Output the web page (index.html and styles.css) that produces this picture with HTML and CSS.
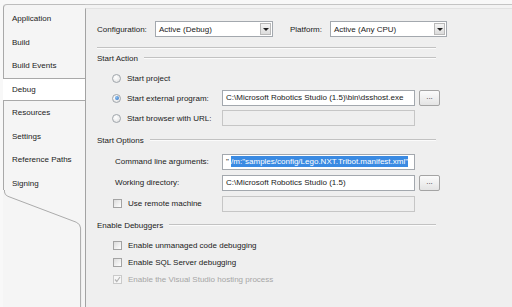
FILE: index.html
```html
<!DOCTYPE html>
<html>
  <head>
    <title>Project Properties - Debug</title>
    <link rel="stylesheet" href="styles.css">
  </head>

  <body>
    <div class="frame">
      <div class="sidebar">
        <ul class="tabs">
          <li>Application</li>
          <li>Build</li>
          <li>Build Events</li>
          <li class="active">Debug</li>
          <li>Resources</li>
          <li>Settings</li>
          <li>Reference Paths</li>
          <li>Signing</li>
        </ul>
        <svg class="tabs-end" width="82" height="120" viewBox="0 0 82 120">
          <path d="M0.5 0 L0.5 2 Q0.5 5 4 6.5 L74 33 Q78.5 35 78.5 39 L78.5 120" fill="none" stroke="#a9a9a9" stroke-width="1"/>
        </svg>
      </div>

      <div class="panel-wrap">
        <div class="panel">
          <div class="config-row">
            <span class="config-label">Configuration:</span>
            <div class="select config-select">
              <span class="select-text">Active (Debug)</span>
              <span class="select-btn"><span class="arrow"></span></span>
            </div>
            <span class="config-label platform-label">Platform:</span>
            <div class="select platform-select">
              <span class="select-text">Active (Any CPU)</span>
              <span class="select-btn"><span class="arrow"></span></span>
            </div>
          </div>

          <div class="sep"></div>

          <div class="group-head"><span>Start Action</span></div>
          <div class="opt-rows radios">
            <div class="opt-row">
              <div class="choice"><span class="radio"></span>Start project</div>
            </div>
            <div class="opt-row">
              <div class="choice"><span class="radio on"></span>Start external program:</div>
              <div class="textbox">C:\Microsoft Robotics Studio (1.5)\bin\dsshost.exe</div>
              <div class="btn">...</div>
            </div>
            <div class="opt-row">
              <div class="choice"><span class="radio"></span>Start browser with URL:</div>
              <div class="textbox disabled"></div>
            </div>
          </div>

          <div class="group-head options-head"><span>Start Options</span></div>
          <div class="opt-rows fields">
            <div class="opt-row">
              <div class="field-label">Command line arguments:</div>
              <div class="textbox">"&nbsp;<span class="selected">/m:"samples/config/Lego.NXT.Tribot.manifest.xml"</span></div>
            </div>
            <div class="opt-row">
              <div class="field-label">Working directory:</div>
              <div class="textbox">C:\Microsoft Robotics Studio (1.5)</div>
              <div class="btn">...</div>
            </div>
            <div class="opt-row">
              <div class="choice"><span class="check"></span>Use remote machine</div>
              <div class="textbox disabled"></div>
            </div>
          </div>

          <div class="group-head debuggers-head"><span>Enable Debuggers</span></div>
          <div class="opt-rows checks">
            <div class="opt-row">
              <div class="choice wide"><span class="check"></span>Enable unmanaged code debugging</div>
            </div>
            <div class="opt-row">
              <div class="choice wide"><span class="check"></span>Enable SQL Server debugging</div>
            </div>
            <div class="opt-row">
              <div class="choice wide dim">
                <span class="check checked">
                  <svg width="7" height="7" viewBox="0 0 7 7"><path d="M1 3.5 L2.8 5.5 L6 1" fill="none" stroke="#b4b4b4" stroke-width="1.2"/></svg>
                </span>Enable the Visual Studio hosting process
              </div>
            </div>
          </div>
        </div>
      </div>
    </div>
  </body>
</html>
```

FILE: styles.css
```css
* {
  box-sizing: border-box;
  margin: 0;
  padding: 0;
}

html, body {
  height: 100%;
}

body {
  background: #f8f8f8;
  color: #1a1a1a;
  font-family: "Liberation Sans", Arial, sans-serif;
  font-size: 8px;
  overflow: hidden;
}

.frame {
  display: flex;
  height: calc(100% - 4px);
  margin: 4px 0 0 3px;
}

/* Left tab strip */
.sidebar {
  width: 82px;
  display: flex;
  flex-direction: column;
  background: #f5f5f5;
}

.tabs {
  list-style: none;
  border-left: 1px solid #a9a9a9;
  border-top: 1px solid #bdbdbd;
  border-top-left-radius: 4px;
  padding-top: 2px;
  height: 186px;
}

.tabs li {
  height: 23.5px;
  line-height: 23.5px;
  padding-left: 8px;
  color: #222;
}

.tabs li.active {
  background: #ffffff;
  border-top: 1px solid #a9a9a9;
  border-bottom: 1px solid #a9a9a9;
  margin-left: -1px;
  padding-left: 9px;
  line-height: 21.5px;
}

.tabs-end {
  display: block;
  flex: 1;
}

/* Main page */
.panel-wrap {
  flex: 1;
  border-top: 1px solid #c4c4c4;
  background: #f3f3f3;
}

.panel {
  height: calc(100% - 3px);
  margin-top: 3px;
  border-left: 1px solid #a3a3a3;
  border-top: 1px solid #e2e2e2;
  background: #efefef;
  padding: 12px 0 0 11px;
}

.config-row {
  display: flex;
  align-items: center;
  height: 16px;
}

.config-label {
  width: 58px;
}

.platform-label {
  width: 40px;
  margin-left: 17px;
}

.select {
  height: 16px;
  background: #fff;
  border: 1px solid #a3a8ae;
  display: flex;
  align-items: center;
  padding: 1px 1px 1px 3px;
}

.config-select {
  width: 118px;
}

.platform-select {
  width: 117px;
}

.select-text {
  flex: 1;
}

.select-btn {
  width: 11px;
  height: 12px;
  background: linear-gradient(#f4f4f4, #dcdcdc);
  border: 1px solid #b9b9b9;
  display: flex;
  align-items: center;
  justify-content: center;
}

.arrow {
  width: 0;
  height: 0;
  border-left: 3px solid transparent;
  border-right: 3px solid transparent;
  border-top: 3px solid #222;
}

.sep {
  width: 339px;
  margin-top: 10px;
  border-top: 1px solid #c2c2c2;
  border-bottom: 1px solid #fbfbfb;
}

.group-head {
  display: flex;
  align-items: center;
  width: 339px;
  height: 12px;
  margin-top: 3px;
}

.group-head::after {
  content: "";
  flex: 1;
  margin-left: 6px;
  border-top: 1px solid #c2c2c2;
  border-bottom: 1px solid #fbfbfb;
}

.options-head {
  margin-top: 6px;
}

.debuggers-head {
  margin-top: 5px;
}

.opt-rows {
  display: flex;
  flex-direction: column;
  padding-left: 15px;
}

.radios {
  margin-top: 4px;
}

.fields {
  margin-top: 5px;
}

.checks {
  margin-top: 6px;
}

.opt-row {
  display: grid;
  grid-template-columns: 106px 193px 21px;
  column-gap: 4px;
  align-items: center;
  height: 20px;
}

.fields .opt-row {
  height: 21px;
}

.checks .opt-row {
  height: 17px;
  grid-template-columns: 300px;
}

.choice {
  display: flex;
  align-items: center;
  gap: 6px;
  white-space: nowrap;
}

.choice.dim {
  color: #a6a6a6;
}

.field-label {
  padding-left: 3px;
  white-space: nowrap;
}

.radio {
  width: 9px;
  height: 9px;
  border-radius: 50%;
  border: 1px solid #a0a6ac;
  background: radial-gradient(circle at 40% 35%, #ffffff, #dedede);
  display: inline-flex;
  align-items: center;
  justify-content: center;
}

.radio.on::after {
  content: "";
  width: 4px;
  height: 4px;
  border-radius: 50%;
  background: radial-gradient(circle at 35% 35%, #8cc0f0, #2a6cc0);
}

.check {
  width: 9px;
  height: 9px;
  margin-left: 1px;
  border: 1px solid #a3a3a3;
  background: linear-gradient(135deg, #dcdcdc, #ffffff);
  display: inline-flex;
  align-items: center;
  justify-content: center;
}

.check.checked {
  border-color: #cacaca;
  background: #f6f6f6;
}

.check svg {
  display: block;
}

.textbox {
  height: 16px;
  line-height: 14px;
  background: #fff;
  border: 1px solid #a3a8ae;
  padding: 0 3px;
  white-space: nowrap;
  overflow: hidden;
}

.textbox.disabled {
  background: #efefef;
  border-color: #c6c6c6;
}

.selected {
  background: #3a8ae2;
  color: #fff;
  padding: 1px 0;
}

.btn {
  height: 16px;
  line-height: 12px;
  text-align: center;
  border: 1px solid #a4a4a4;
  border-radius: 2px;
  background: linear-gradient(#fbfbfb, #e4e4e4);
  color: #333;
}
```
